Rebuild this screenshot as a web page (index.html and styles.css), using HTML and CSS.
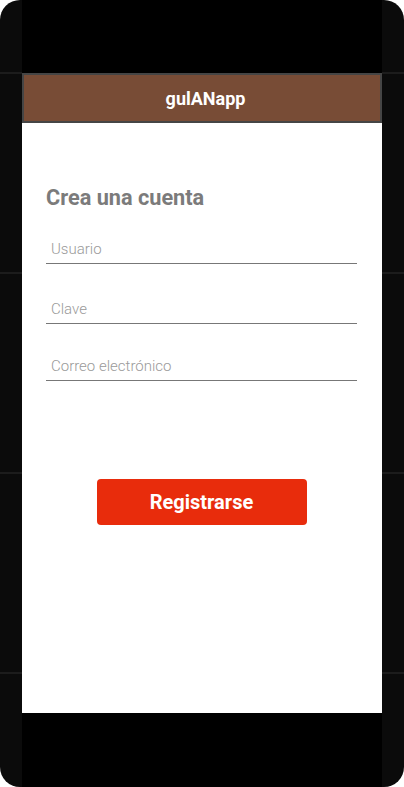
FILE: index.html
```html
<!DOCTYPE html>
<html lang="es">
<head>
<meta charset="utf-8">
<title>gulANapp</title>
<link rel="stylesheet" href="styles.css">
</head>
<body>
<div class="phone">
  <div class="screen">
    <div class="status"></div>
    <header class="appbar">gulANapp</header>
    <main class="content">
      <h1 class="title">Crea una cuenta</h1>
      <div class="field field-first"><span class="label">Usuario</span></div>
      <div class="field"><span class="label">Clave</span></div>
      <div class="field field-last"><span class="label">Correo electrónico</span></div>
      <div class="actions"><button class="btn">Registrarse</button></div>
    </main>
    <div class="navbar"></div>
  </div>
</div>
</body>
</html>
```
FILE: styles.css
```css
html, body {
  margin: 0;
  padding: 0;
  background: #ffffff;
}
body {
  font-family: Roboto, "Liberation Sans", sans-serif;
}
.phone {
  width: 404px;
  height: 787px;
  border-radius: 20px;
  overflow: hidden;
  background-color: #0b0b0b;
  background-image: repeating-linear-gradient(to bottom, transparent 0, transparent 72px, #1c1c1c 72px, #1c1c1c 74px, transparent 74px, transparent 200px);
  padding: 0 22px;
  box-sizing: border-box;
}
.screen {
  width: 360px;
  height: 787px;
  display: flex;
  flex-direction: column;
  background: #000;
}
.status {
  height: 73px;
  background: #000;
}
.appbar {
  height: 46px;
  border: 2px solid #454545;
  background: #784c36;
  color: #fff;
  font-weight: 700;
  font-size: 18px;
  display: flex;
  align-items: center;
  justify-content: center;
  padding-left: 7px;
}
.content {
  height: 590px;
  background: #fff;
  padding: 0 25px 0 24px;
  display: flex;
  flex-direction: column;
}
.title {
  margin: 63px 0 0 0;
  font-size: 21.7px;
  line-height: 24px;
  font-weight: 700;
  color: #7b7b7b;
}
.field {
  height: 28px;
  border-bottom: 1px solid #777;
  display: flex;
  align-items: flex-end;
  margin-top: 31px;
}
.field-first {
  margin-top: 25px;
}
.field-last {
  margin-top: 28px;
}
.label {
  padding: 0 0 5px 5px;
  font-size: 15px;
  font-weight: 300;
  color: #9a9a9a;
  line-height: 17px;
}
.actions {
  display: flex;
  justify-content: center;
  margin-top: 98px;
}
.btn {
  width: 210px;
  height: 46px;
  border: none;
  border-radius: 4px;
  background: #e82c0c;
  color: #fff;
  font-family: Roboto, "Liberation Sans", sans-serif;
  font-size: 20px;
  font-weight: 700;
}
.navbar {
  height: 74px;
  background: #000;
}
```
